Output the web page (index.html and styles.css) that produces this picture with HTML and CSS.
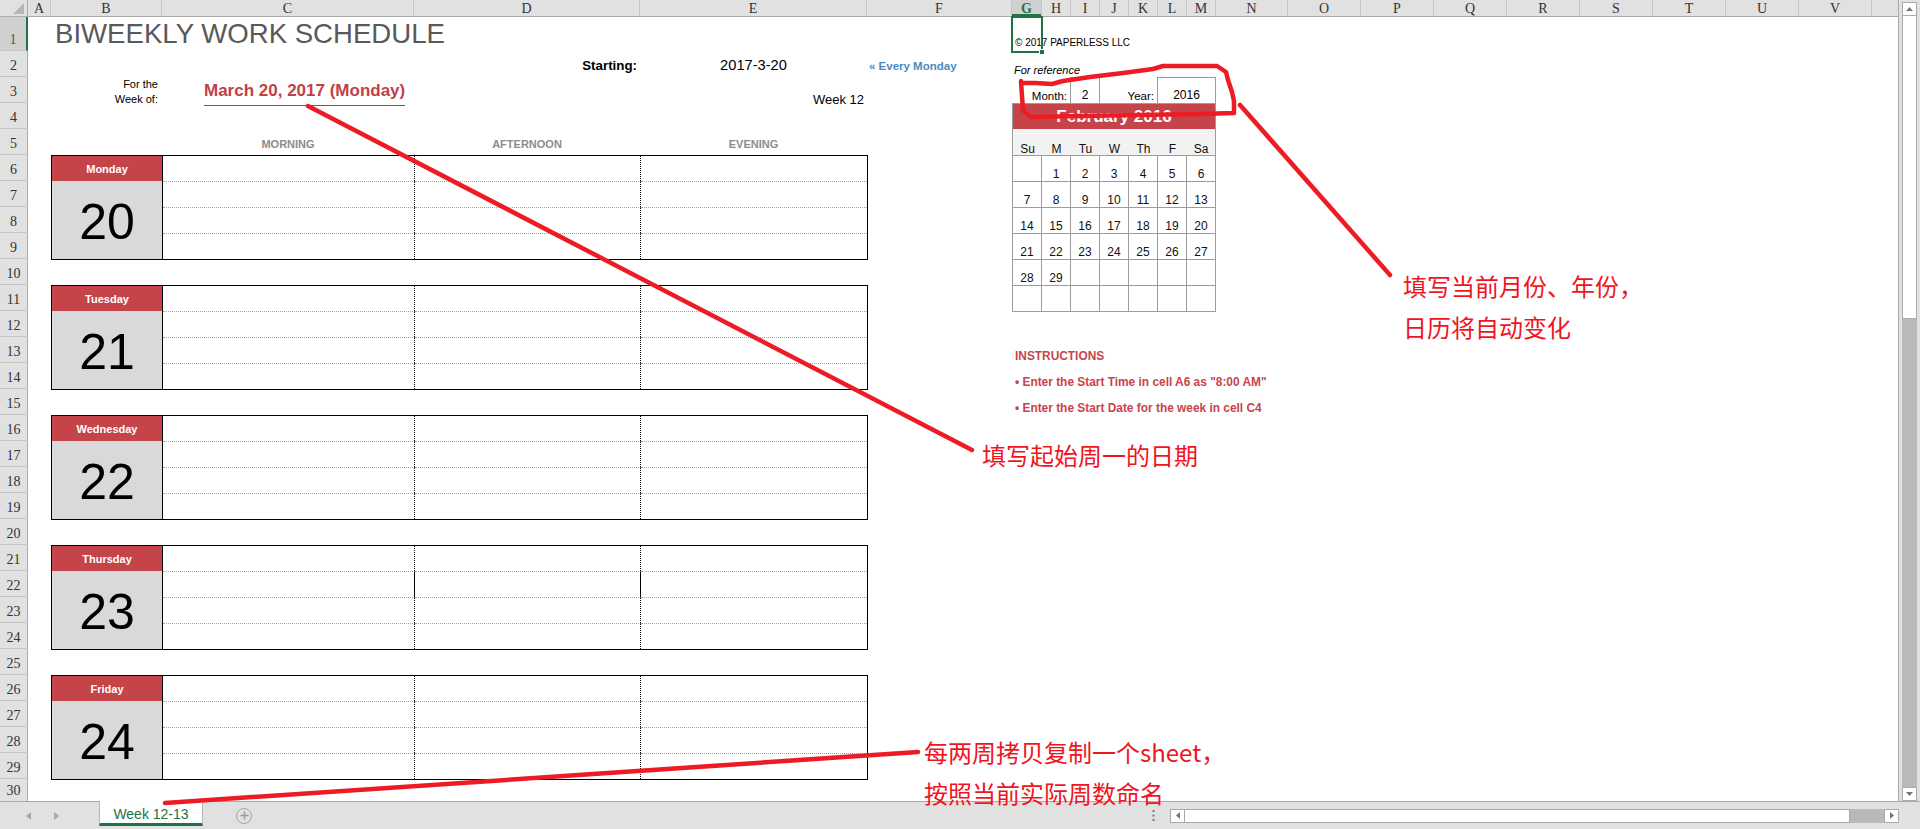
FILE: index.html
```html
<!DOCTYPE html>
<html lang="zh-CN">
<head>
<meta charset="utf-8">
<title>Biweekly Work Schedule</title>
<link rel="stylesheet" href="styles.css">
</head>
<body>
<div class="app">
  <div class="workspace">
    <div class="sheet">
      <div class="colhead">
        <div class="ch corner w-rh">
          <svg class="corner-tri" width="11" height="11" viewBox="0 0 11 11"><polygon points="11,0 11,11 0,11" fill="#b7b7b7"/></svg>
        </div>
        <div class="ch w-a">A</div>
        <div class="ch w-b">B</div>
        <div class="ch w-c">C</div>
        <div class="ch w-d">D</div>
        <div class="ch w-e">E</div>
        <div class="ch w-f">F</div>
        <div class="ch w-g ch-sel">G</div>
        <div class="ch w-cal">H</div>
        <div class="ch w-cal">I</div>
        <div class="ch w-cal">J</div>
        <div class="ch w-cal">K</div>
        <div class="ch w-cal">L</div>
        <div class="ch w-cal">M</div>
        <div class="ch w-n">N</div>
        <div class="ch w-o">O</div>
        <div class="ch w-o">P</div>
        <div class="ch w-o">Q</div>
        <div class="ch w-o">R</div>
        <div class="ch w-o">S</div>
        <div class="ch w-o">T</div>
        <div class="ch w-o">U</div>
        <div class="ch w-o">V</div>
        <div class="ch w-w"></div>
      </div>
      <div class="sheetbody">
        <div class="rowhead">
          <div class="rh rh-tall rh-sel">1</div>
          <div class="rh">2</div>
          <div class="rh">3</div>
          <div class="rh">4</div>
          <div class="rh">5</div>
          <div class="rh">6</div>
          <div class="rh">7</div>
          <div class="rh">8</div>
          <div class="rh">9</div>
          <div class="rh">10</div>
          <div class="rh">11</div>
          <div class="rh">12</div>
          <div class="rh">13</div>
          <div class="rh">14</div>
          <div class="rh">15</div>
          <div class="rh">16</div>
          <div class="rh">17</div>
          <div class="rh">18</div>
          <div class="rh">19</div>
          <div class="rh">20</div>
          <div class="rh">21</div>
          <div class="rh">22</div>
          <div class="rh">23</div>
          <div class="rh">24</div>
          <div class="rh">25</div>
          <div class="rh">26</div>
          <div class="rh">27</div>
          <div class="rh">28</div>
          <div class="rh">29</div>
          <div class="rh rh-last">30</div>
        </div>
        <div class="canvas">
          <div class="left">
            <div class="title">BIWEEKLY WORK SCHEDULE</div>
            <div class="lrow">
              <div></div>
              <div></div>
              <div class="cell al-r starting">Starting:</div>
              <div class="cell al-c start-date">2017-3-20</div>
              <div class="cell every">« Every Monday</div>
            </div>
            <div class="lrow">
              <div class="weekof">For the<br>Week of:</div>
              <div class="march-cell"><span class="march">March 20, 2017 (Monday)</span></div>
              <div></div>
              <div class="cell al-r week-num">Week 12</div>
              <div></div>
            </div>
            <div class="lrow"></div>
            <div class="lrow">
              <div></div>
              <div class="cell al-c period">MORNING</div>
              <div class="cell al-c period">AFTERNOON</div>
              <div class="cell al-c period">EVENING</div>
              <div></div>
            </div>

            <div class="block">
              <div class="day">Monday</div>
              <div class="slot first sep"></div><div class="slot first sep"></div><div class="slot first"></div>
              <div class="num">20</div>
              <div class="slot sep"></div><div class="slot sep"></div><div class="slot"></div>
              <div class="slot sep"></div><div class="slot sep"></div><div class="slot"></div>
              <div class="slot sep"></div><div class="slot sep"></div><div class="slot"></div>
            </div>
            <div class="block">
              <div class="day">Tuesday</div>
              <div class="slot first sep"></div><div class="slot first sep"></div><div class="slot first"></div>
              <div class="num">21</div>
              <div class="slot sep"></div><div class="slot sep"></div><div class="slot"></div>
              <div class="slot sep"></div><div class="slot sep"></div><div class="slot"></div>
              <div class="slot sep"></div><div class="slot sep"></div><div class="slot"></div>
            </div>
            <div class="block">
              <div class="day">Wednesday</div>
              <div class="slot first sep"></div><div class="slot first sep"></div><div class="slot first"></div>
              <div class="num">22</div>
              <div class="slot sep"></div><div class="slot sep"></div><div class="slot"></div>
              <div class="slot sep"></div><div class="slot sep"></div><div class="slot"></div>
              <div class="slot sep"></div><div class="slot sep"></div><div class="slot"></div>
            </div>
            <div class="block">
              <div class="day">Thursday</div>
              <div class="slot first sep"></div><div class="slot first sep"></div><div class="slot first"></div>
              <div class="num">23</div>
              <div class="slot sep solid"></div><div class="slot sep solid"></div><div class="slot"></div>
              <div class="slot sep"></div><div class="slot sep"></div><div class="slot"></div>
              <div class="slot sep"></div><div class="slot sep"></div><div class="slot"></div>
            </div>
            <div class="block">
              <div class="day">Friday</div>
              <div class="slot first sep"></div><div class="slot first sep"></div><div class="slot first"></div>
              <div class="num">24</div>
              <div class="slot sep"></div><div class="slot sep"></div><div class="slot"></div>
              <div class="slot sep"></div><div class="slot sep"></div><div class="slot"></div>
              <div class="slot sep"></div><div class="slot sep"></div><div class="slot"></div>
            </div>
          </div>

          <div class="right">
            <div class="r-copy">© 2017 PAPERLESS LLC</div>
            <div class="r-ref">For reference</div>
            <div class="r-month">
              <div class="m-lab">Month:</div>
              <div class="m-box">2</div>
              <div class="m-lab">Year:</div>
              <div class="m-box">2016</div>
            </div>
            <div class="cal">
              <div class="cal-head">February 2016</div>
              <div class="dn">Su</div><div class="dn">M</div><div class="dn">Tu</div><div class="dn">W</div><div class="dn">Th</div><div class="dn">F</div><div class="dn dn-last">Sa</div>
              <div class="dt"></div><div class="dt">1</div><div class="dt">2</div><div class="dt">3</div><div class="dt">4</div><div class="dt">5</div><div class="dt">6</div>
              <div class="dt">7</div><div class="dt">8</div><div class="dt">9</div><div class="dt">10</div><div class="dt">11</div><div class="dt">12</div><div class="dt">13</div>
              <div class="dt">14</div><div class="dt">15</div><div class="dt">16</div><div class="dt">17</div><div class="dt">18</div><div class="dt">19</div><div class="dt">20</div>
              <div class="dt">21</div><div class="dt">22</div><div class="dt">23</div><div class="dt">24</div><div class="dt">25</div><div class="dt">26</div><div class="dt">27</div>
              <div class="dt">28</div><div class="dt">29</div><div class="dt"></div><div class="dt"></div><div class="dt"></div><div class="dt"></div><div class="dt"></div>
              <div class="dt"></div><div class="dt"></div><div class="dt"></div><div class="dt"></div><div class="dt"></div><div class="dt"></div><div class="dt"></div>
            </div>
            <div class="r-gap"></div>
            <div class="r-instr">INSTRUCTIONS</div>
            <div class="r-instr">• Enter the Start Time in cell A6 as "8:00 AM"</div>
            <div class="r-instr">• Enter the Start Date for the week in cell C4</div>
            <div class="sel-box"><span class="sel-handle"></span></div>
          </div>
        </div>
      </div>
    </div>
    <div class="vscroll">
      <div class="vbtn"><svg width="7" height="4" viewBox="0 0 7 4"><polygon points="0,4 7,4 3.5,0" fill="#777"/></svg></div>
      <div class="vthumb"></div>
      <div class="vtrack"></div>
      <div class="vbtn"><svg width="7" height="4" viewBox="0 0 7 4"><polygon points="0,0 7,0 3.5,4" fill="#777"/></svg></div>
    </div>
  </div>
  <div class="tabbar">
    <svg class="nav-prev" width="5" height="8" viewBox="0 0 5 8"><polygon points="5,0 5,8 0,4" fill="#a6a6a6"/></svg>
    <svg class="nav-next" width="5" height="8" viewBox="0 0 5 8"><polygon points="0,0 0,8 5,4" fill="#a6a6a6"/></svg>
    <div class="tab">Week 12-13</div>
    <div class="plus"><svg width="9" height="9" viewBox="0 0 9 9"><path d="M4.5 0.5 V8.5 M0.5 4.5 H8.5" stroke="#9a9a9a" stroke-width="1.4"/></svg></div>
    <svg class="splitter" width="3" height="11" viewBox="0 0 3 11"><rect x="0.5" y="0" width="2" height="2" fill="#7a7a7a"/><rect x="0.5" y="4.5" width="2" height="2" fill="#7a7a7a"/><rect x="0.5" y="9" width="2" height="2" fill="#7a7a7a"/></svg>
    <div class="hscroll">
      <div class="hbtn"><svg width="4" height="7" viewBox="0 0 4 7"><polygon points="4,0 4,7 0,3.5" fill="#777"/></svg></div>
      <div class="hthumb"></div>
      <div class="htrack"></div>
      <div class="hbtn"><svg width="4" height="7" viewBox="0 0 4 7"><polygon points="0,0 0,7 4,3.5" fill="#777"/></svg></div>
    </div>
  </div>
</div>

<div class="annotations">
  <svg class="strokes" width="1920" height="829" viewBox="0 0 1920 829">
    <g fill="none" stroke="#ed1c24" stroke-width="4.5" stroke-linecap="round" stroke-linejoin="round">
      <polyline points="308,106 972,450"/>
      <polyline points="1021,81 1022,96 1023,110 1030,117 1080,116 1140,115 1200,114 1234,113 1234,101 1232,92 1228,80 1226,72 1217,66 1190,66 1163,66 1153,69 1123,73 1090,77 1063,81 1052,84 1035,83 1023,83"/>
      <polyline points="1240,105 1390,275"/>
      <polyline points="165,803 918,752"/>
    </g>
  </svg>
  <div class="note note-cal">填写当前月份、年份，<br>日历将自动变化</div>
  <div class="note note-date">填写起始周一的日期</div>
  <div class="note note-sheet">每两周拷贝复制一个sheet，<br>按照当前实际周数命名</div>
</div>
</body>
</html>
```

FILE: styles.css
```css
* { box-sizing: border-box; }
html, body { margin: 0; padding: 0; }
body {
  width: 1920px;
  height: 829px;
  overflow: hidden;
  position: relative;
  background: #fff;
  font-family: "Liberation Sans", Arial, sans-serif;
  color: #000;
}

.app { display: flex; flex-direction: column; height: 829px; }
.workspace { display: flex; height: 801px; flex: none; }

/* ---------- sheet ---------- */
.sheet {
  width: 1899px;
  flex: none;
  display: flex;
  flex-direction: column;
  border-right: 1px solid #a9a9a9;
  background: #fff;
}

.colhead {
  display: flex;
  height: 17px;
  flex: none;
  background: #e1e1e1;
  border-bottom: 1px solid #ababab;
}
.ch {
  flex: none;
  height: 16px;
  border-right: 1px solid #c6c6c6;
  font-family: "Liberation Serif", "DejaVu Serif", serif;
  font-size: 14px;
  line-height: 17px;
  text-align: center;
  color: #333;
}
.corner { position: relative; border-right: 1px solid #ababab; }
.corner-tri { position: absolute; right: 3px; bottom: 2px; }
.ch-sel { background: #d0d0d0; color: #217346; box-shadow: inset 0 -2px 0 #217346; font-weight: bold; }

.w-rh { width: 28px; }
.w-a { width: 23px; }
.w-b { width: 111px; }
.w-c { width: 252px; }
.w-d { width: 226px; }
.w-e { width: 227px; }
.w-f { width: 145px; }
.w-g { width: 30px; }
.w-cal { width: 29px; }
.w-n { width: 72px; }
.w-o { width: 73px; }
.w-w { width: 26px; border-right: none; }

.sheetbody { display: flex; flex: 1; min-height: 0; }

.rowhead {
  width: 28px;
  flex: none;
  display: flex;
  flex-direction: column;
  background: #e1e1e1;
}
.rh {
  flex: none;
  height: 26px;
  border-bottom: 1px solid #c6c6c6;
  border-right: 1px solid #ababab;
  display: flex;
  align-items: flex-end;
  justify-content: center;
  padding-bottom: 3px;
  font-family: "Liberation Serif", "DejaVu Serif", serif;
  font-size: 14px;
  line-height: 14px;
  color: #333;
}
.rh-tall { height: 34px; }
.rh-sel { background: #d0d0d0; color: #217346; border-right: 2px solid #217346; }
.rh-last { flex: 1; height: auto; border-bottom: none; }

.canvas { flex: 1; display: flex; min-width: 0; }

/* ---------- left: schedule ---------- */
.left {
  width: 984px;
  flex: none;
  padding-left: 23px;
  display: flex;
  flex-direction: column;
}
.title {
  height: 34px;
  flex: none;
  padding-left: 4px;
  font-size: 27.6px;
  line-height: 34px;
  color: #595959;
  white-space: nowrap;
}
.lrow {
  display: grid;
  grid-template-columns: 111px 252px 226px 227px 145px;
  height: 26px;
  flex: none;
}
.cell {
  display: flex;
  align-items: flex-end;
  white-space: nowrap;
  padding: 0 3px 4px;
}
.al-r { justify-content: flex-end; }
.al-c { justify-content: center; }

.starting { font-weight: bold; font-size: 13.33px; }
.start-date { font-size: 14.67px; }
.every { font-weight: bold; font-size: 11.5px; color: #4b8bc0; padding-left: 2px; padding-bottom: 5px; }
.weekof {
  font-size: 11px;
  line-height: 15px;
  text-align: right;
  padding-right: 4px;
  white-space: nowrap;
}
.march-cell { padding: 4px 0 0 42px; white-space: nowrap; }
.march {
  display: inline-block;
  font-size: 17px;
  font-weight: bold;
  line-height: 20px;
  color: #c23f47;
  padding-bottom: 4px;
  border-bottom: 1px solid #df2a32;
}
.week-num { font-size: 13px; padding-bottom: 0; }
.period { font-size: 11px; font-weight: bold; color: #8c8c8c; padding-bottom: 5px; }

.block {
  flex: none;
  display: grid;
  grid-template-columns: 111px 252px 226px 226px;
  grid-template-rows: 25px 26px 26px 26px;
  width: 817px;
  height: 105px;
  border: 1px solid #000;
  margin-bottom: 25px;
}
.day {
  background: #c4444a;
  color: #fff;
  font-weight: bold;
  font-size: 11px;
  display: flex;
  align-items: center;
  justify-content: center;
  border-right: 1px solid #000;
}
.num {
  grid-row: span 3;
  background: #d9d9d9;
  border-right: 1px solid #000;
  display: flex;
  align-items: center;
  justify-content: center;
  font-size: 50px;
  padding-top: 4px;
}
.slot { border-top: 1px dotted #a3a3a3; }
.slot.first { border-top: none; }
.sep { border-right: 1px dotted #000; }
.sep.solid { border-right-style: solid; }

/* ---------- right: calendar ---------- */
.right {
  width: 204px;
  flex: none;
  position: relative;
  display: flex;
  flex-direction: column;
}
.r-copy {
  height: 34px;
  flex: none;
  display: flex;
  align-items: flex-end;
  padding: 0 0 3px 3px;
  font-size: 10px;
  white-space: nowrap;
}
.r-ref {
  height: 26px;
  flex: none;
  display: flex;
  align-items: flex-end;
  padding: 0 0 1px 2px;
  font-size: 11px;
  font-style: italic;
  white-space: nowrap;
}
.r-month {
  display: grid;
  grid-template-columns: 58px 30px 57px 59px;
  height: 26px;
  flex: none;
}
.m-lab {
  display: flex;
  align-items: flex-end;
  justify-content: flex-end;
  padding: 0 3px 1px 0;
  font-size: 11.5px;
}
.m-box {
  border: 1px solid #9c9c9c;
  border-bottom: none;
  display: flex;
  align-items: flex-end;
  justify-content: center;
  padding-bottom: 1px;
  font-size: 12px;
}
.cal {
  flex: none;
  width: 204px;
  display: grid;
  grid-template-columns: repeat(7, 29px);
  border-left: 1px solid #9c9c9c;
  border-top: 1px solid #9c9c9c;
  font-size: 12px;
  color: #111;
}
.cal-head {
  grid-column: 1 / -1;
  height: 25px;
  background: #c4444a;
  color: #fff;
  font-weight: bold;
  font-size: 17px;
  display: flex;
  align-items: center;
  justify-content: center;
  border-right: 1px solid #9c9c9c;
}
.dn {
  height: 27px;
  background: #f2f2f2;
  border-bottom: 1px solid #9c9c9c;
  display: flex;
  align-items: flex-end;
  justify-content: center;
  line-height: 12px;
}
.dn-last { border-right: 1px solid #9c9c9c; }
.dt {
  height: 26px;
  border-right: 1px solid #9c9c9c;
  border-bottom: 1px solid #9c9c9c;
  display: flex;
  align-items: flex-end;
  justify-content: center;
  line-height: 12px;
  padding-bottom: 1px;
}
.r-gap { height: 25px; flex: none; }
.r-instr {
  height: 26px;
  flex: none;
  display: flex;
  align-items: flex-end;
  padding: 0 0 1px 3px;
  font-size: 11.9px;
  font-weight: bold;
  line-height: 12px;
  color: #c8444c;
  white-space: nowrap;
}
.sel-box {
  position: absolute;
  left: -1px;
  top: -1px;
  width: 32px;
  height: 37px;
  border: 2px solid #217346;
}
.sel-handle {
  position: absolute;
  right: -4px;
  bottom: -4px;
  width: 6px;
  height: 6px;
  background: #217346;
  border: 1px solid #fff;
}

/* ---------- vertical scrollbar ---------- */
.vscroll {
  width: 21px;
  flex: none;
  background: #e1e1e1;
  display: flex;
  flex-direction: column;
  padding: 2px 3px 0 3px;
}
.vbtn {
  flex: none;
  height: 14px;
  border: 1px solid #ababab;
  background: #fff;
  display: flex;
  align-items: center;
  justify-content: center;
}
.vthumb {
  flex: none;
  height: 303px;
  border: 1px solid #ababab;
  border-top: none;
  background: #fff;
}
.vtrack { flex: 1; background: #b9b9b9; }

/* ---------- tab bar ---------- */
.tabbar {
  height: 28px;
  flex: none;
  background: #e1e1e1;
  border-top: 1px solid #a9a9a9;
  display: flex;
  align-items: center;
  padding-right: 21px;
}
.nav-prev { margin-left: 26px; flex: none; }
.nav-next { margin-left: 23px; flex: none; }
.tab {
  flex: none;
  align-self: flex-start;
  margin-top: -1px;
  margin-left: 40px;
  width: 104px;
  height: 25px;
  padding-top: 3px;
  background: #fff;
  border-left: 1px solid #b5b5b5;
  border-right: 1px solid #b5b5b5;
  border-bottom: 3px solid #217346;
  color: #217346;
  font-size: 14px;
  display: flex;
  align-items: center;
  justify-content: center;
}
.plus {
  flex: none;
  margin-left: 33px;
  width: 16px;
  height: 16px;
  border-radius: 50%;
  border: 1px solid #a5a5a5;
  display: flex;
  align-items: center;
  justify-content: center;
}
.splitter { margin-left: auto; margin-right: 15px; flex: none; }
.hscroll { display: flex; width: 729px; height: 14px; flex: none; }
.hbtn {
  width: 15px;
  flex: none;
  border: 1px solid #ababab;
  background: #fff;
  display: flex;
  align-items: center;
  justify-content: center;
}
.hthumb { width: 665px; flex: none; border: 1px solid #ababab; border-left: none; background: #fff; }
.htrack { flex: 1; background: #b9b9b9; }

/* ---------- annotations (overlay) ---------- */
.annotations {
  position: absolute;
  left: 0;
  top: 0;
  width: 1920px;
  height: 829px;
  pointer-events: none;
}
.strokes { position: absolute; left: 0; top: 0; }
.note {
  position: absolute;
  font-family: "Noto Sans CJK SC", "Noto Sans", sans-serif;
  font-size: 24px;
  line-height: 41px;
  color: #f0141e;
  white-space: nowrap;
}
.note-cal { left: 1403px; top: 265px; }
.note-date { left: 982px; top: 434px; }
.note-sheet { left: 924px; top: 731px; }
```
